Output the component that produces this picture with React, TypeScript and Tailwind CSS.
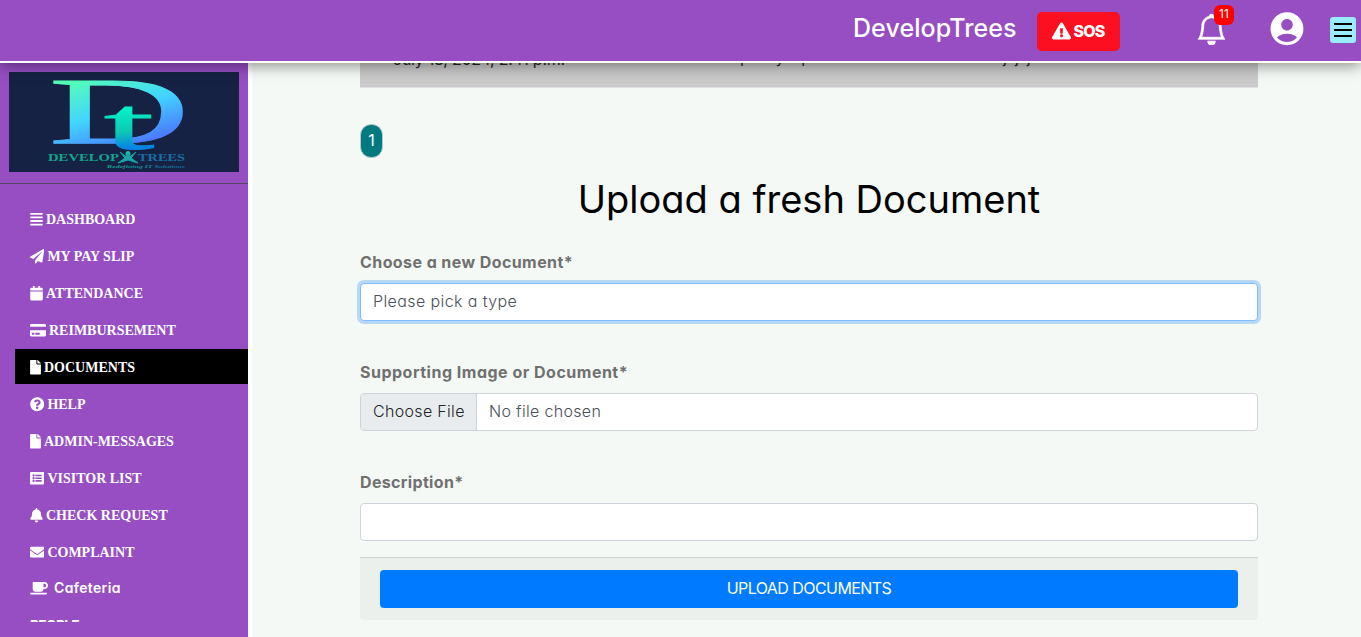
import type { ReactNode } from "react";
import type { IconType } from "react-icons";
import {
  FaAlignJustify, FaPaperPlane, FaCalendar, FaCreditCard, FaFile, FaQuestionCircle,
  FaListAlt, FaBell, FaEnvelope, FaCoffee, FaExclamationTriangle,
} from "react-icons/fa";
import { BsBell } from "react-icons/bs";
import { MdAccountCircle } from "react-icons/md";

type NavEntry = { label: string; icon: IconType; width: string; active?: boolean };

const navEntries: NavEntry[] = [
  { label: "DASHBOARD", icon: FaAlignJustify, width: "w-[13px]" },
  { label: "MY PAY SLIP", icon: FaPaperPlane, width: "w-[14.4px]" },
  { label: "ATTENDANCE", icon: FaCalendar, width: "w-[13px]" },
  { label: "REIMBURSEMENT", icon: FaCreditCard, width: "w-4" },
  { label: "DOCUMENTS", icon: FaFile, width: "w-[11px]", active: true },
  { label: "HELP", icon: FaQuestionCircle, width: "w-[14.4px]" },
  { label: "ADMIN-MESSAGES", icon: FaFile, width: "w-[11px]" },
  { label: "VISITOR LIST", icon: FaListAlt, width: "w-[14.4px]" },
  { label: "CHECK REQUEST", icon: FaBell, width: "w-[13px]" },
  { label: "COMPLAINT", icon: FaEnvelope, width: "w-[14.4px]" },
];

function Logo() {
  return (
    <svg viewBox="0 0 230 100" className="block h-[100px] w-[230px] bg-[#162243]" role="img">
      <defs>
        <linearGradient id="d" gradientUnits="userSpaceOnUse" x1="5" y1="-65" x2="50" y2="5">
          <stop offset="0.05" stopColor="#54ffb5" />
          <stop offset="0.5" stopColor="#41d5ff" />
          <stop offset="0.9" stopColor="#4b7bff" />
        </linearGradient>
        <linearGradient id="t" gradientUnits="userSpaceOnUse" x1="5" y1="-44" x2="14" y2="0">
          <stop offset="0.1" stopColor="#04f0c8" />
          <stop offset="0.6" stopColor="#0cc9b4" />
          <stop offset="0.95" stopColor="#0784e4" />
        </linearGradient>
        <linearGradient id="w" x1="0" x2="1">
          <stop offset="0" stopColor="#14a98e" />
          <stop offset="1" stopColor="#155d9c" />
        </linearGradient>
      </defs>
      <text transform="translate(39.500 72) scale(2.06 1)" fontFamily="Liberation Serif, serif" fontSize="95" fill="url(#d)" stroke="url(#d)" strokeWidth="0.8">D</text>
      <text transform="translate(95 77) scale(2.4 1)" fontFamily="Liberation Serif, serif" fontSize="75" fill="url(#t)" stroke="url(#t)" strokeWidth="1">t</text>
      <g fontFamily="Liberation Serif, serif" fontWeight="700">
        <text x="39" y="89" fontSize="9.5" textLength="71" lengthAdjust="spacingAndGlyphs" fill="#12a58d">DEVELOP</text>
        <text x="129" y="89" fontSize="9.5" textLength="47" lengthAdjust="spacingAndGlyphs" fill="#176fa2">TREES</text>
        <text x="98" y="96" fontSize="5" fontStyle="italic" textLength="78" lengthAdjust="spacingAndGlyphs" fill="url(#w)">Redefining IT Solutions</text>
      </g>
      <circle cx="119" cy="81.500" r="2.5" fill="#16b5a5" />
      <path d="M111 80l5 4h6l5-4-5 6 7 5-10-3-10 3 7-5z" fill="#18a7a8" stroke="#18a7a8" />
    </svg>
  );
}

function Field({ label, tracking, children }: { label: string; tracking: string; children: ReactNode }) {
  return (
    <div className="flex h-[110px] flex-col">
      <label className={`mb-[9px] h-6 text-base leading-6 font-bold whitespace-nowrap text-[#6f706f] ${tracking}`}>{label}</label>
      {children}
    </div>
  );
}

export default function App() {
  return (
    <div className="flex h-[637px] w-[1361px] flex-col overflow-hidden bg-[#f4f9f5] font-['Inter',sans-serif] [font-feature-settings:'cv11']">
      <header className="relative z-10 flex h-[63px] shrink-0 border-b-2 border-white bg-[#964ec2] pl-[853px] text-white shadow-[0_3px_14px_rgba(0,0,0,0.42)]">
        <div className="mt-[10px] h-9 w-[184px] text-[25px] leading-9 font-medium tracking-[0.08px] whitespace-nowrap">DevelopTrees</div>
        <button className="mt-3 flex h-[39px] w-[83px] items-center justify-center gap-0.5 rounded-[5px] bg-[#fc0f21] pb-px text-base font-extrabold">
          <FaExclamationTriangle className="h-[18px] w-[19px]" />
          <span className="tracking-[-0.8px]">SOS</span>
        </button>
        <div className="relative mt-[14px] ml-[76px] h-[31px] w-[31px]">
          <BsBell className="h-[31px] w-[31px] stroke-[0.4]" />
          <span className="absolute -top-[9px] left-[18px] flex h-5 w-5 items-center justify-center rounded-md bg-[#f00] pb-0.5 text-xs">11</span>
        </div>
        <MdAccountCircle className="mt-[8.5px] ml-10 h-[39.5px] w-10" />
        <button className="mt-[17px] ml-[23px] flex h-[26px] w-[26px] flex-col items-center gap-1 rounded-[3px] bg-[#99ecff] pt-1.5">
          <span className="h-0.5 w-[18px] bg-black" />
          <span className="h-0.5 w-[18px] bg-black" />
          <span className="h-0.5 w-[18px] bg-black" />
        </button>
      </header>

      <div className="flex min-h-0 flex-1">
        <aside className="w-[252px] shrink-0 border-r-4 border-white bg-[#964ec2] text-white">
          <div className="h-[121px] border-b border-[#54495f] pt-[9px] pl-[9px]">
            <Logo />
          </div>
          <nav className="flex h-[438px] flex-col gap-0.5 overflow-hidden pt-[17px] pl-[15px]">
            {navEntries.map(({ label, icon: Icon, width, active }) => (
              <a key={label} className={`flex h-[35px] shrink-0 items-center gap-[3px] pt-0.5 pl-[15px] font-['Liberation_Serif',serif] text-[14px] font-bold ${active ? "bg-black" : ""}`}>
                <Icon className={`h-[14.4px] shrink-0 ${width}`} />
                <span>{label}</span>
              </a>
            ))}
            <a className="flex h-[35px] shrink-0 items-center gap-[6px] pl-[15px] text-[14px] font-semibold">
              <FaCoffee className="h-[14.4px] w-[18px]" />
              <span className="-mt-0.5 tracking-[0.35px]">Cafeteria</span>
            </a>
            <a className="flex h-[35px] shrink-0 items-center pl-[15px] text-[14px] font-bold tracking-[-0.8px]">PEOPLE</a>
          </nav>
        </aside>

        <main className="flex flex-1 flex-col overflow-hidden pr-[103px] pl-[108px]">
          <div className="-mt-[31px] flex h-[56px] shrink-0 border-b border-[#dee2e6] bg-[#cbcbcb] text-base leading-6 whitespace-nowrap text-[#212529]">
            <span className="w-[340px] pt-[15px] pl-[33px] tracking-[-0.25px]">July 18, 2024, 2:41 p.m.</span>
            <span className="w-[303px] pt-[13px] pl-[40px] tracking-[1px]">party up</span>
            <span className="pt-[13px] tracking-[8px]">jjj</span>
          </div>
          <div className="mt-9 flex h-[34px] w-[23px] shrink-0 items-center justify-center rounded-[11px] border border-[#b9c9ca] bg-[#00797f] pb-0.5 text-base text-white">1</div>
          <h1 className="mt-[19px] h-[44px] shrink-0 text-center text-[38px] leading-[44px] font-normal text-black">Upload a fresh Document</h1>
          <form className="mt-[29px] flex flex-col">
            <Field label="Choose a new Document*" tracking="tracking-[0.42px]">
              <div className="flex h-[38px] items-center rounded border border-[#80bdff] bg-white px-3 pb-0.5 text-base font-[350] tracking-[0.4px] text-[#495057] shadow-[0_0_0_3px_rgba(0,123,255,0.25)]">Please pick a type</div>
            </Field>
            <Field label="Supporting Image or Document*" tracking="tracking-[0.5px]">
              <div className="flex h-[38px] items-center overflow-hidden rounded border border-[#ced4da] bg-white text-base font-[350] tracking-[0.32px] text-[#495057]">
                <span className="flex h-full w-[116px] items-center border-r border-[#ced4da] bg-[#e9ecef] pb-0.5 pl-3 text-[#212529]">Choose File</span>
                <span className="pb-0.5 pl-3">No file chosen</span>
              </div>
            </Field>
            <div className="flex h-[87px] flex-col">
              <label className="mb-[9px] h-6 text-base leading-6 font-bold tracking-[0.34px] text-[#6f706f]">Description*</label>
              <input className="h-[38px] rounded border border-[#ced4da] bg-white px-3" />
            </div>
            <div className="h-[63px] rounded-b border-t border-[#cdd3cf] bg-[#ebf0ec] px-5 pt-3">
              <button type="button" className="h-[38px] w-full rounded bg-[#007bff] pb-0.5 text-base tracking-[-0.56px] text-white">UPLOAD DOCUMENTS</button>
            </div>
          </form>
        </main>
      </div>
    </div>
  );
}
